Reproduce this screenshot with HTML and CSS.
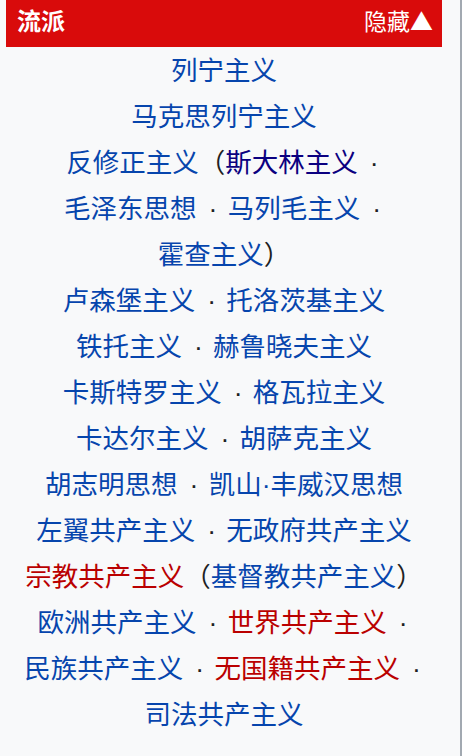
FILE: index.html
```html
<!DOCTYPE html>
<html lang="zh-CN">
<head>
<meta charset="utf-8">
<link rel="stylesheet" href="styles.css">
</head>
<body>
<div class="frame">
  <div class="navbox">
    <div class="head">
      <span class="title">流派</span>
      <span class="toggle">隐藏▲</span>
    </div>
    <div class="list">
      <div class="group">
        <span class="item"><a class="lk">列宁主义</a></span>
      </div>
      <div class="group">
        <span class="item"><a class="lk">马克思列宁主义</a></span>
      </div>
      <div class="group">
        <span class="item"><a class="lk">反修正主义</a><span class="paren">（</span><a class="lk visited">斯大林主义</a><span class="sep">·</span></span>
        <span class="item"><a class="lk">毛泽东思想</a><span class="sep">·</span></span>
        <span class="item"><a class="lk">马列毛主义</a><span class="sep">·</span></span>
        <span class="item"><a class="lk">霍查主义</a><span class="paren">）</span></span>
      </div>
      <div class="group">
        <span class="item"><a class="lk">卢森堡主义</a><span class="sep">·</span></span>
        <span class="item"><a class="lk">托洛茨基主义</a></span>
      </div>
      <div class="group">
        <span class="item"><a class="lk">铁托主义</a><span class="sep">·</span></span>
        <span class="item"><a class="lk">赫鲁晓夫主义</a></span>
      </div>
      <div class="group">
        <span class="item"><a class="lk">卡斯特罗主义</a><span class="sep">·</span></span>
        <span class="item"><a class="lk">格瓦拉主义</a></span>
      </div>
      <div class="group">
        <span class="item"><a class="lk">卡达尔主义</a><span class="sep">·</span></span>
        <span class="item"><a class="lk">胡萨克主义</a></span>
      </div>
      <div class="group">
        <span class="item"><a class="lk">胡志明思想</a><span class="sep">·</span></span>
        <span class="item"><a class="lk">凯山·丰威汉思想</a></span>
      </div>
      <div class="group">
        <span class="item"><a class="lk">左翼共产主义</a><span class="sep">·</span></span>
        <span class="item"><a class="lk">无政府共产主义</a></span>
      </div>
      <div class="group">
        <span class="item"><a class="lk new">宗教共产主义</a><span class="paren">（</span><a class="lk">基督教共产主义</a><span class="paren">）</span></span>
      </div>
      <div class="group">
        <span class="item"><a class="lk">欧洲共产主义</a><span class="sep">·</span></span>
        <span class="item"><a class="lk new">世界共产主义</a><span class="sep">·</span></span>
        <span class="item"><a class="lk">民族共产主义</a><span class="sep">·</span></span>
        <span class="item"><a class="lk new">无国籍共产主义</a><span class="sep">·</span></span>
        <span class="item"><a class="lk">司法共产主义</a></span>
      </div>
    </div>
  </div>
</div>
</body>
</html>
```

FILE: styles.css
```css
html, body {
  margin: 0;
  padding: 0;
  background: #f8f9fa;
}

body {
  font-family: "Liberation Sans", "Noto Sans CJK SC", sans-serif;
  color: #202122;
}

.frame {
  width: 462px;
  min-height: 756px;
  box-sizing: border-box;
  border-right: 2px solid #a2a9b1;
  padding-left: 6px;
}

.navbox {
  width: 436px;
}

.head {
  height: 47px;
  background: #d90b0b;
  color: #ffffff;
  display: flex;
  justify-content: space-between;
  align-items: flex-start;
  padding: 4px 9px 0 11px;
  box-sizing: border-box;
  font-family: "Noto Sans CJK SC", sans-serif;
}

.title {
  font-size: 24px;
  font-weight: 700;
  line-height: 32px;
}

.toggle {
  font-size: 23px;
  line-height: 32px;
}

.list {
  text-align: center;
  font-size: 26.5px;
  line-height: 46px;
  padding: 1px 7px 0;
}

.item {
  white-space: nowrap;
}

.lk {
  color: #0645ad;
  text-decoration: none;
}

.lk.visited {
  color: #0b0080;
}

.lk.new {
  color: #ba0000;
}

.sep {
  color: #202122;
  margin: 0 3px 0 12px;
}

.paren {
  color: #202122;
}
```
